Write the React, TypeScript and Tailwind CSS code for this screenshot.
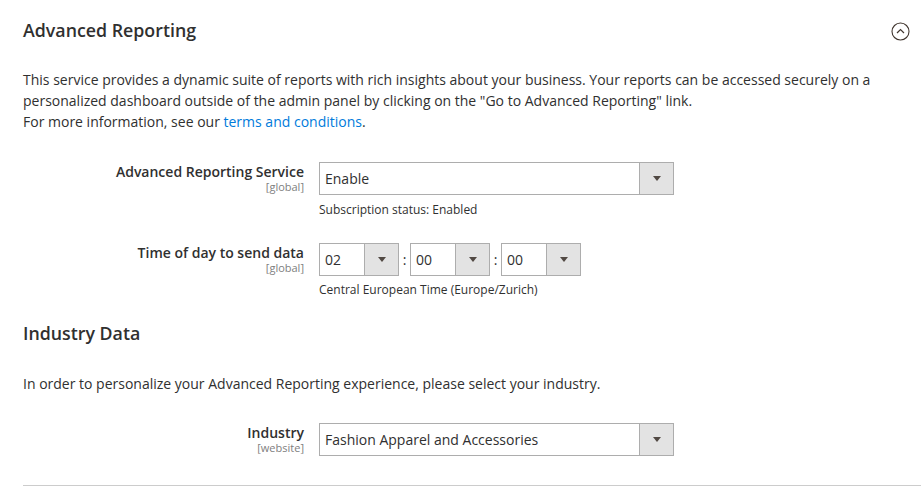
import type { ReactNode } from 'react';

function Arrow() {
    return (
        <svg width="8" height="5" viewBox="0 0 8 5" className="block">
            <path d="M0 0H8L4 5Z" fill="#514943" />
        </svg>
    );
}

function SelectBox({ value, width, arrowWidth = 34 }: { value: string; width: string; arrowWidth?: number }) {
    return (
        <div className={`flex h-[33px] ${width} border border-[#adadad] bg-white`}>
            <div className="flex flex-1 items-center pl-[5px] text-[14px] text-[#303030]">{value}</div>
            <div
                className="flex items-center justify-center border-l border-[#adadad] bg-[#e3e3e3]"
                style={{ width: arrowWidth }}
            >
                <Arrow />
            </div>
        </div>
    );
}

function FieldRow({ label, scope, children }: { label: string; scope: string; children: ReactNode }) {
    return (
        <div className="flex">
            <div className="w-[281px] pt-[1px] text-right">
                <div className="text-[14px] font-semibold leading-[17px] text-[#303030]">{label}</div>
                <div className="text-[11px] leading-[13px] text-[#808080]">{scope}</div>
            </div>
            <div className="ml-[15px]">{children}</div>
        </div>
    );
}

export default function App() {
    return (
        <div
            className="h-[489px] w-full bg-white pl-[23px] pr-[3px] text-[#303030]"
            style={{ fontFamily: '"Open Sans", "Noto Sans", sans-serif' }}
        >
            <div className="flex items-center justify-between pt-[19px]">
                <h2 className="text-[17.8px] font-semibold leading-[22px] text-[#303030]">Advanced Reporting</h2>
                <svg width="19" height="19" viewBox="0 0 19 19" className="mr-[11px] mt-[2px]">
                    <circle cx="9.5" cy="9.5" r="8.5" fill="none" stroke="#41362f" strokeWidth="1.1" />
                    <path d="M6 11L9.5 7.5L13 11" fill="none" stroke="#41362f" strokeWidth="1.2" />
                </svg>
            </div>

            <p className="mt-[28px] text-[14px] leading-[21px]">
                This service provides a dynamic suite of reports with rich insights about your business. Your reports can be
                accessed securely on a personalized dashboard outside of the admin panel by clicking on the &quot;Go to
                Advanced Reporting&quot; link.
                <br />
                For more information, see our{' '}
                <a href="#" className="text-[#007bdb]">
                    terms and conditions
                </a>
                .
            </p>

            <div className="mt-[30px]">
                <FieldRow label="Advanced Reporting Service" scope="[global]">
                    <SelectBox value="Enable" width="w-[355px]" />
                    <div className="mt-[6px] text-[12px] leading-[18px]">Subscription status: Enabled</div>
                </FieldRow>
            </div>

            <div className="mt-[24px]">
                <FieldRow label="Time of day to send data" scope="[global]">
                    <div className="flex items-center">
                        <SelectBox value="02" width="w-[80px]" />
                        <span className="w-[11px] text-center text-[14px]">:</span>
                        <SelectBox value="00" width="w-[80px]" />
                        <span className="w-[11px] text-center text-[14px]">:</span>
                        <SelectBox value="00" width="w-[80px]" />
                    </div>
                    <div className="mt-[5px] text-[12px] leading-[18px]">Central European Time (Europe/Zurich)</div>
                </FieldRow>
            </div>

            <h2 className="mt-[23px] text-[17.8px] font-semibold leading-[22px]">Industry Data</h2>

            <p className="mt-[29px] text-[14px] leading-[21px]">
                In order to personalize your Advanced Reporting experience, please select your industry.
            </p>

            <div className="mt-[29px]">
                <FieldRow label="Industry" scope="[website]">
                    <SelectBox value="Fashion Apparel and Accessories" width="w-[355px]" />
                </FieldRow>
            </div>

            <div className="mt-[29px] border-t border-[#cccccc]" />
        </div>
    );
}
